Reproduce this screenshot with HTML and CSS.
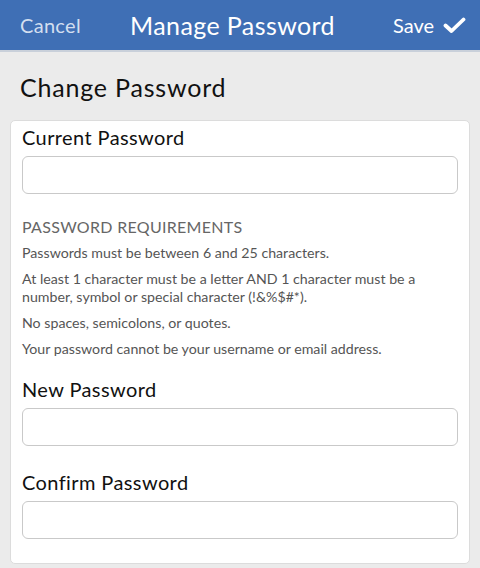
FILE: index.html
```html
<!DOCTYPE html>
<html>
<head>
<meta charset="utf-8">
<link rel="stylesheet" href="styles.css">
</head>
<body>
<header class="topbar">
  <span class="cancel">Cancel</span>
  <span class="title">Manage Password</span>
  <span class="save">Save
    <svg class="check" width="23" height="17" viewBox="0 0 23 17"><path d="M2.5 8.5 L8.5 14 L20.5 2.5" fill="none" stroke="#fff" stroke-width="3.8" stroke-linecap="round" stroke-linejoin="round"/></svg>
  </span>
</header>
<h1 class="page-title">Change Password</h1>
<main class="card">
  <div class="field">
    <label class="label">Current Password</label>
    <div class="input"></div>
  </div>
  <section class="reqs">
    <h2 class="reqs-title">PASSWORD REQUIREMENTS</h2>
    <p>Passwords must be between 6 and 25 characters.</p>
    <p>At least 1 character must be a letter AND 1 character must be a number, symbol or special character (!&amp;%$#*).</p>
    <p>No spaces, semicolons, or quotes.</p>
    <p>Your password cannot be your username or email address.</p>
  </section>
  <div class="field">
    <label class="label">New Password</label>
    <div class="input"></div>
  </div>
  <div class="field">
    <label class="label">Confirm Password</label>
    <div class="input"></div>
  </div>
</main>
</body>
</html>
```
FILE: styles.css
```css
html, body {
  margin: 0;
  padding: 0;
}
body {
  background: #ebebeb;
  font-family: "Lato", "Noto Sans", sans-serif;
  color: #111;
  width: 480px;
  height: 568px;
  overflow: hidden;
}
.topbar {
  height: 50px;
  background: #3f6fb5;
  border-bottom: 2px solid #c9d0da;
  display: flex;
  align-items: center;
  padding: 0 14px 0 20px;
  color: #fff;
  box-sizing: content-box;
}
.cancel {
  font-size: 20px;
  color: #d3dff0;
  width: 110px;
  letter-spacing: 0.3px;
}
.title {
  font-size: 25px;
  flex: 1;
  letter-spacing: 0.4px;
}
.save {
  font-size: 20px;
  display: flex;
  align-items: center;
  gap: 9px;
}
.check {
  display: block;
}
.page-title {
  margin: 0;
  font-weight: 400;
  font-size: 25px;
  letter-spacing: 0.8px;
  padding: 20px 20px 0;
  height: 50px;
  box-sizing: border-box;
  line-height: 30px;
}
.card {
  display: block;
  margin: 18px 10px 0;
  background: #fff;
  border: 1px solid #dcdcdc;
  border-radius: 5px;
  padding: 2px 11px 24px;
}
.field {
  display: flex;
  flex-direction: column;
}
.label {
  font-size: 20px;
  letter-spacing: 0.4px;
  line-height: 29px;
  height: 33px;
}
.input {
  height: 38px;
  box-sizing: border-box;
  border: 1px solid #c9c9c9;
  border-radius: 6px;
  background: #fff;
}
.field + .field {
  margin-top: 22px;
}
.reqs {
  padding: 23px 0 17px;
  color: #555;
}
.reqs-title {
  margin: 0 0 7px;
  font-weight: 400;
  font-size: 16px;
  letter-spacing: 0.3px;
  line-height: 20px;
  color: #666;
}
.reqs p {
  margin: 0 0 8px;
  font-size: 14.2px;
  line-height: 18px;
}
.reqs p:last-child {
  margin-bottom: 0;
}
```
